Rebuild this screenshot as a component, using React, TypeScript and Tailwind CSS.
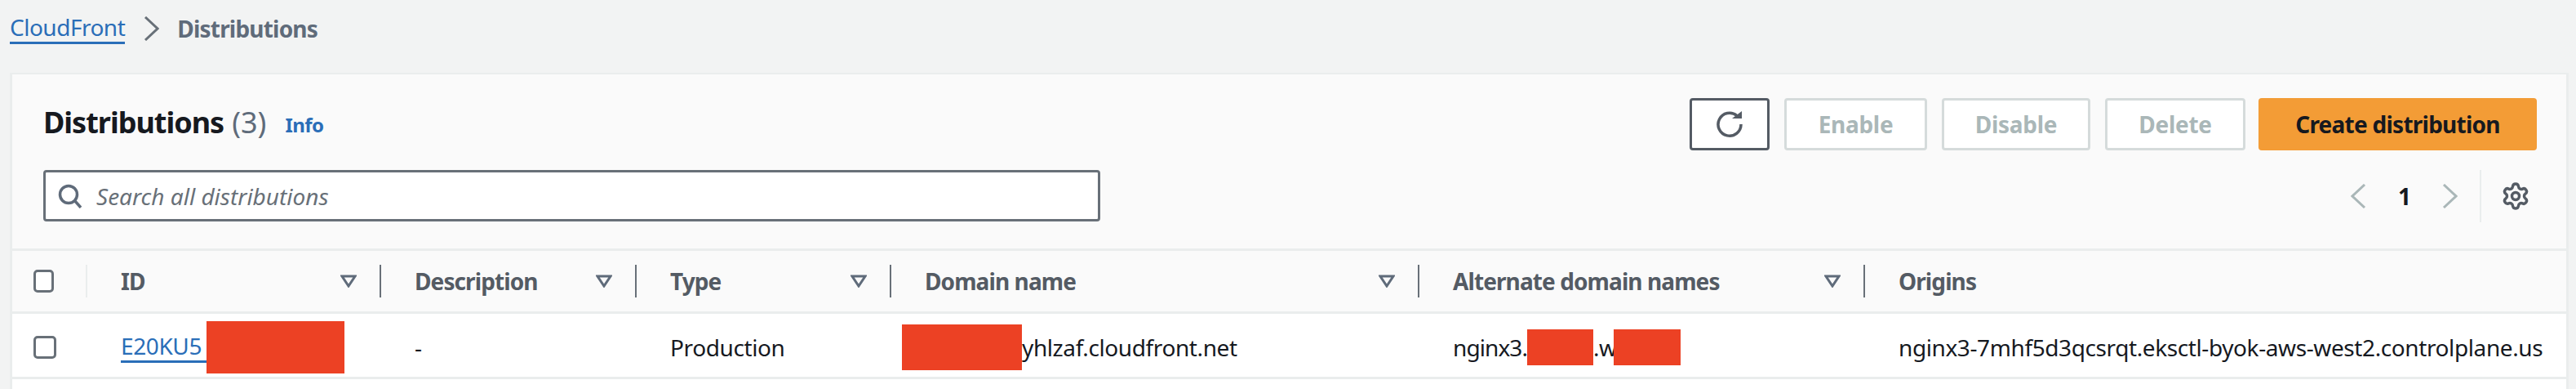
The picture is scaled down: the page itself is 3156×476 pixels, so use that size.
import { Settings } from 'lucide-react';

const FONT = "font-['Noto_Sans',sans-serif]";

const columns = [
  { label: 'ID', filter: true },
  { label: 'Description', filter: true },
  { label: 'Type', filter: true },
  { label: 'Domain name', filter: true },
  { label: 'Alternate domain names', filter: true },
  { label: 'Origins', filter: false },
];

function Chevron({ dir, className }: { dir: 'left' | 'right'; className: string }) {
  return (
    <svg viewBox="0 0 19 30" className={`h-[30px] w-[19px] ${className}`} fill="none" stroke="currentColor" strokeWidth="3">
      <polyline points={dir === 'right' ? '2,1 17,15 2,29' : '17,1 2,15 17,29'} strokeLinejoin="miter" />
    </svg>
  );
}

function FilterIcon() {
  return (
    <svg viewBox="0 0 20 16" className="h-4 w-5 shrink-0 text-[#5f6b7a]" fill="none" stroke="currentColor" strokeWidth="3">
      <polygon points="2,2 18,2 10,14" />
    </svg>
  );
}

function Checkbox() {
  return <div className="h-7 w-7 rounded-[5px] border-[3px] border-[#687078] bg-white" />;
}

export default function App() {
  return (
    <div className={`h-[476px] w-[3156px] overflow-hidden bg-[#f2f3f3] ${FONT} text-[#16191f]`}>
      {/* Breadcrumb */}
      <div className="flex h-[89px] items-center pb-5 pl-3 text-[28px]">
        <a className="border-b-[3px] border-[#2a6eb8] leading-[36px] tracking-[-0.5px] text-[#2a6eb8]">CloudFront</a>
        <Chevron dir="right" className="ml-[23px] text-[#687078]" />
        <span className="ml-[22px] font-bold tracking-[-0.8px] text-[#5f6b7a]">Distributions</span>
      </div>

      {/* Card */}
      <div className="ml-3 mr-[9px] h-[387px] border-x-[3px] border-t-2 border-[#eaeded] bg-[#fafafa]">
        {/* Toolbar */}
        <div className="flex h-[213px] justify-between pl-[38px] pr-[36px]">
          <div className="flex flex-col">
            <div className="mt-[34px] flex h-[50px] items-center">
              <h1 className="text-[36px] font-bold leading-none tracking-[-1px]">Distributions</h1>
              <span className="ml-[10px] text-[36px] leading-none text-[#5f6b7a]">(3)</span>
              <a className="ml-[23px] mt-[6px] text-[24px] font-bold leading-none tracking-[-0.5px] text-[#2a6eb8]">Info</a>
            </div>
            <div className="mt-[33px] flex h-[63px] w-[1295px] items-center rounded-[4px] border-[3px] border-[#687078] bg-white pl-[15px]">
              <svg viewBox="0 0 30 30" className="h-[30px] w-[30px] text-[#5f6b7a]" fill="none" stroke="currentColor" strokeWidth="3.5">
                <circle cx="13" cy="13" r="10.5" />
                <line x1="20" y1="20" x2="28" y2="29" />
              </svg>
              <span className="ml-[17px] text-[28px] italic text-[#687078]">Search all distributions</span>
            </div>
          </div>

          <div className="flex flex-col items-end">
            <div className="mt-[29px] flex h-16 items-stretch text-[28px] font-bold tracking-[-0.3px]">
              <button className="flex w-[98px] items-center justify-center rounded-[4px] border-[3px] border-[#545b64] bg-white text-[#545b64]">
                <svg viewBox="0 0 34 34" className="h-[34px] w-[34px]" fill="none" stroke="currentColor" strokeWidth="3.5">
                  <path d="M26 6.5A14 14 0 1 0 31 17" />
                  <path d="M20 10h12V1z" fill="currentColor" stroke="none" />
                </svg>
              </button>
              <button className="ml-[18px] w-[175px] rounded-[4px] border-[3px] border-[#d5dbdb] bg-white text-[#aab7b8]">Enable</button>
              <button className="ml-[18px] w-[182px] rounded-[4px] border-[3px] border-[#d5dbdb] bg-white text-[#aab7b8]">Disable</button>
              <button className="ml-[18px] w-[172px] rounded-[4px] border-[3px] border-[#d5dbdb] bg-white text-[#aab7b8]">Delete</button>
              <button className="ml-4 w-[341px] rounded-[4px] bg-[#f39c36] tracking-[-0.75px] text-[#16191f]">Create distribution</button>
            </div>
            <div className="mr-2 mt-6 flex h-16 items-center">
              <Chevron dir="left" className="text-[#aab7b8]" />
              <span className="ml-[37px] w-[20px] text-center text-[28px] font-bold leading-none">1</span>
              <Chevron dir="right" className="ml-[36px] text-[#aab7b8]" />
              <div className="ml-[27px] h-16 w-[2px] bg-[#eaeded]" />
              <Settings size={36} strokeWidth={2.3} className="ml-6 text-[#545b64]" />
            </div>
          </div>
        </div>

        {/* Table header */}
        <div className="grid h-20 grid-cols-[92px_360px_313px_312px_647px_546px_1fr] border-y-[3px] border-[#eaeded] bg-[#fafafa]">
          <div className="flex items-center pl-[26px]">
            <Checkbox />
            <div className="ml-[39px] h-10 w-[2px] bg-[#eaeded]" />
          </div>
          {columns.map((col) => (
            <div key={col.label} className="flex items-center pl-[41px] text-[28px] font-bold tracking-[-0.9px] text-[#545b64]">
              <span className="flex-1">{col.label}</span>
              {col.filter && <FilterIcon />}
              {col.filter && <div className="ml-[28px] h-10 w-[2px] bg-[#687078]" />}
            </div>
          ))}
        </div>

        {/* Row */}
        <div className="grid h-20 grid-cols-[92px_360px_313px_312px_647px_546px_1fr] border-b-[3px] border-[#eaeded] bg-white pt-1 text-[28px] tracking-[-0.4px]">
          <div className="flex items-center pl-[26px]">
            <Checkbox />
          </div>
          <div className="flex items-center pl-[41px]">
            <a className="w-[105px] border-b-[3px] border-[#2a6eb8] leading-[36px] text-[#2a6eb8]">E20KU5</a>
            <div className="h-16 w-[169px] bg-[#ec4124]" />
          </div>
          <div className="flex items-center pl-[41px]">-</div>
          <div className="flex items-center pl-[41px]">Production</div>
          <div className="flex items-center pl-[13px]">
            <div className="h-14 w-[147px] bg-[#ec4124]" />
            <span>yhlzaf.cloudfront.net</span>
          </div>
          <div className="flex items-center pl-[41px]">
            <span className="w-[91px] tracking-[-0.9px]">nginx3.</span>
            <div className="h-11 w-[81px] bg-[#ec4124]" />
            <span className="w-[25px]">.w</span>
            <div className="h-11 w-[82px] bg-[#ec4124]" />
          </div>
          <div className="flex items-center whitespace-nowrap pl-[41px]">nginx3-7mhf5d3qcsrqt.eksctl-byok-aws-west2.controlplane.us</div>
        </div>
        <div className="h-4 bg-white" />
      </div>
    </div>
  );
}
